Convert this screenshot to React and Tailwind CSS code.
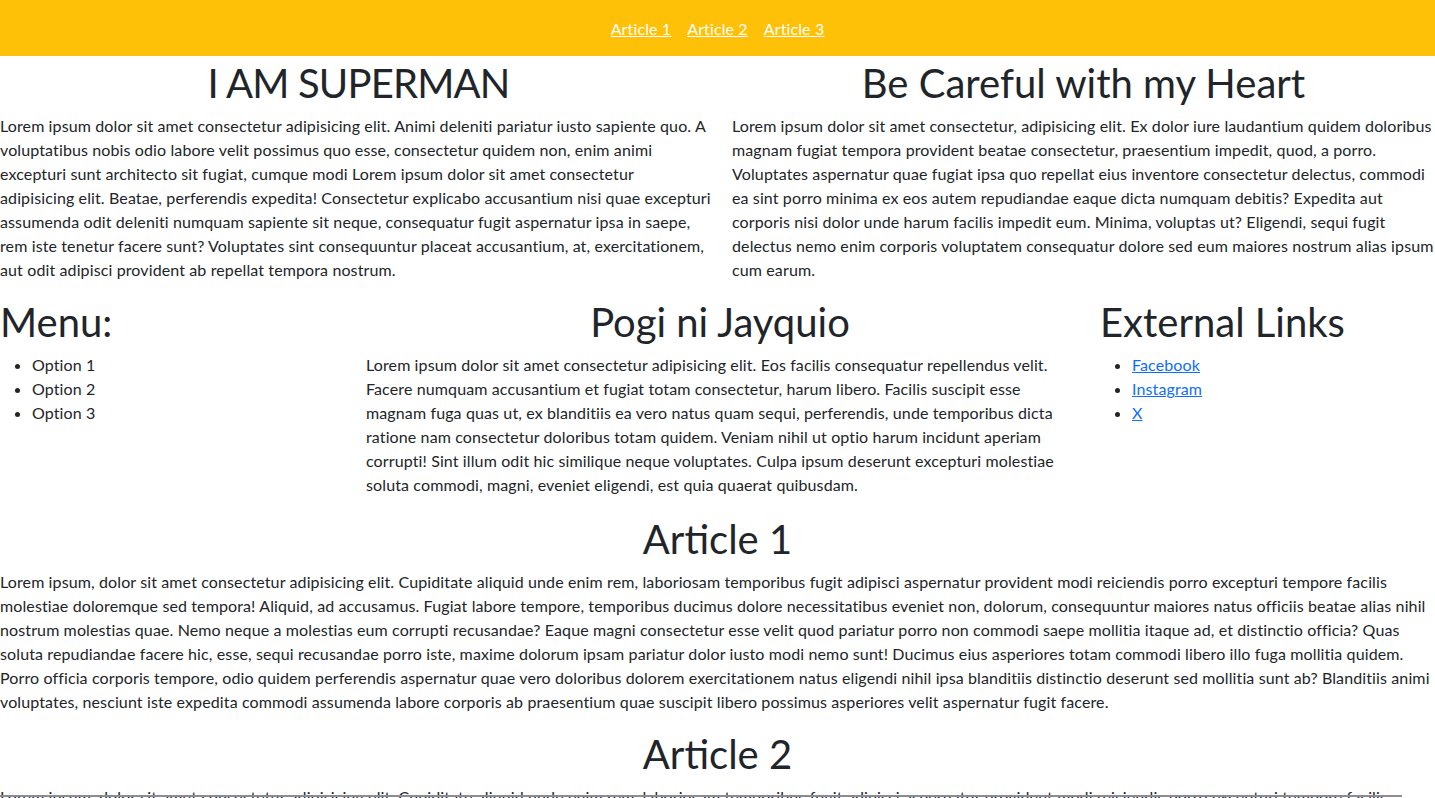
import React from 'react';

const font = { fontFamily: 'Lato, "Open Sans", sans-serif' };

const supermanText = 'Lorem ipsum dolor sit amet consectetur adipisicing elit. Animi deleniti pariatur iusto sapiente quo. A voluptatibus nobis odio labore velit possimus quo esse, consectetur quidem non, enim animi excepturi sunt architecto sit fugiat, cumque modi Lorem ipsum dolor sit amet consectetur adipisicing elit. Beatae, perferendis expedita! Consectetur explicabo accusantium nisi quae excepturi assumenda odit deleniti numquam sapiente sit neque, consequatur fugit aspernatur ipsa in saepe, rem iste tenetur facere sunt? Voluptates sint consequuntur placeat accusantium, at, exercitationem, aut odit adipisci provident ab repellat tempora nostrum.';

const heartText = 'Lorem ipsum dolor sit amet consectetur, adipisicing elit. Ex dolor iure laudantium quidem doloribus magnam fugiat tempora provident beatae consectetur, praesentium impedit, quod, a porro. Voluptates aspernatur quae fugiat ipsa quo repellat eius inventore consectetur delectus, commodi ea sint porro minima ex eos autem repudiandae eaque dicta numquam debitis? Expedita aut corporis nisi dolor unde harum facilis impedit eum. Minima, voluptas ut? Eligendi, sequi fugit delectus nemo enim corporis voluptatem consequatur dolore sed eum maiores nostrum alias ipsum cum earum.';

const pogiText = 'Lorem ipsum dolor sit amet consectetur adipisicing elit. Eos facilis consequatur repellendus velit. Facere numquam accusantium et fugiat totam consectetur, harum libero. Facilis suscipit esse magnam fuga quas ut, ex blanditiis ea vero natus quam sequi, perferendis, unde temporibus dicta ratione nam consectetur doloribus totam quidem. Veniam nihil ut optio harum incidunt aperiam corrupti! Sint illum odit hic similique neque voluptates. Culpa ipsum deserunt excepturi molestiae soluta commodi, magni, eveniet eligendi, est quia quaerat quibusdam.';

const articleText = 'Lorem ipsum, dolor sit amet consectetur adipisicing elit. Cupiditate aliquid unde enim rem, laboriosam temporibus fugit adipisci aspernatur provident modi reiciendis porro excepturi tempore facilis molestiae doloremque sed tempora! Aliquid, ad accusamus. Fugiat labore tempore, temporibus ducimus dolore necessitatibus eveniet non, dolorum, consequuntur maiores natus officiis beatae alias nihil nostrum molestias quae. Nemo neque a molestias eum corrupti recusandae? Eaque magni consectetur esse velit quod pariatur porro non commodi saepe mollitia itaque ad, et distinctio officia? Quas soluta repudiandae facere hic, esse, sequi recusandae porro iste, maxime dolorum ipsam pariatur dolor iusto modi nemo sunt! Ducimus eius asperiores totam commodi libero illo fuga mollitia quidem. Porro officia corporis tempore, odio quidem perferendis aspernatur quae vero doloribus dolorem exercitationem natus eligendi nihil ipsa blanditiis distinctio deserunt sed mollitia sunt ab? Blanditiis animi voluptates, nesciunt iste expedita commodi assumenda labore corporis ab praesentium quae suscipit libero possimus asperiores velit aspernatur fugit facere.';

const Heading = ({ children, center = true, className = 'tracking-normal' }) => (
  <h1 className={`text-[40px] leading-[1.2] font-normal mb-[7px] ${className} ${center ? 'text-center' : ''}`}>{children}</h1>
);

const Para = ({ children }) => <p className="mb-4">{children}</p>;

const App = () => {
  return (
    <div className="min-h-screen bg-white text-[#212529] text-base leading-6 tracking-[0.12px]" style={font}>
      <nav className="h-14 bg-[#ffc107] flex items-center justify-center gap-4 pt-[2px]">
        <a href="#article1" className="text-white underline">Article 1</a>
        <a href="#article2" className="text-white underline">Article 2</a>
        <a href="#article3" className="text-white underline">Article 3</a>
      </nav>

      <main className="pt-[3px]">
        <section className="flex">
          <div className="w-[717px] pr-[6px]">
            <Heading className="tracking-[-0.8px] pl-[6px]">I AM SUPERMAN</Heading>
            <Para>{supermanText}</Para>
          </div>
          <div className="flex-1 ml-[15px]">
            <Heading>Be Careful with my Heart</Heading>
            <Para>{heartText}</Para>
          </div>
        </section>

        <section className="flex">
          <div className="w-[366px]">
            <Heading center={false}>Menu:</Heading>
            <ul className="list-disc pl-8 mb-4">
              <li>Option 1</li>
              <li>Option 2</li>
              <li>Option 3</li>
            </ul>
          </div>
          <div className="w-[708px]">
            <Heading>Pogi ni Jayquio</Heading>
            <Para>{pogiText}</Para>
          </div>
          <div className="flex-1 pl-[26px]">
            <Heading center={false}>External Links</Heading>
            <ul className="list-disc pl-8 mb-4">
              <li><a href="#" className="text-[#0d6efd] underline">Facebook</a></li>
              <li><a href="#" className="text-[#0d6efd] underline">Instagram</a></li>
              <li><a href="#" className="text-[#0d6efd] underline">X</a></li>
            </ul>
          </div>
        </section>

        <article id="article1" className="pt-[2px]">
          <Heading>Article 1</Heading>
          <Para>{articleText}</Para>
        </article>
        <article id="article2">
          <Heading>Article 2</Heading>
          <Para>{articleText}</Para>
        </article>
        <article id="article3">
          <Heading>Article 3</Heading>
          <Para>{articleText}</Para>
        </article>
      </main>

      <div className="fixed left-0 bottom-[1px] w-[1402px] h-[2px] bg-[#8c8c96]" />
    </div>
  );
};

export default App;
